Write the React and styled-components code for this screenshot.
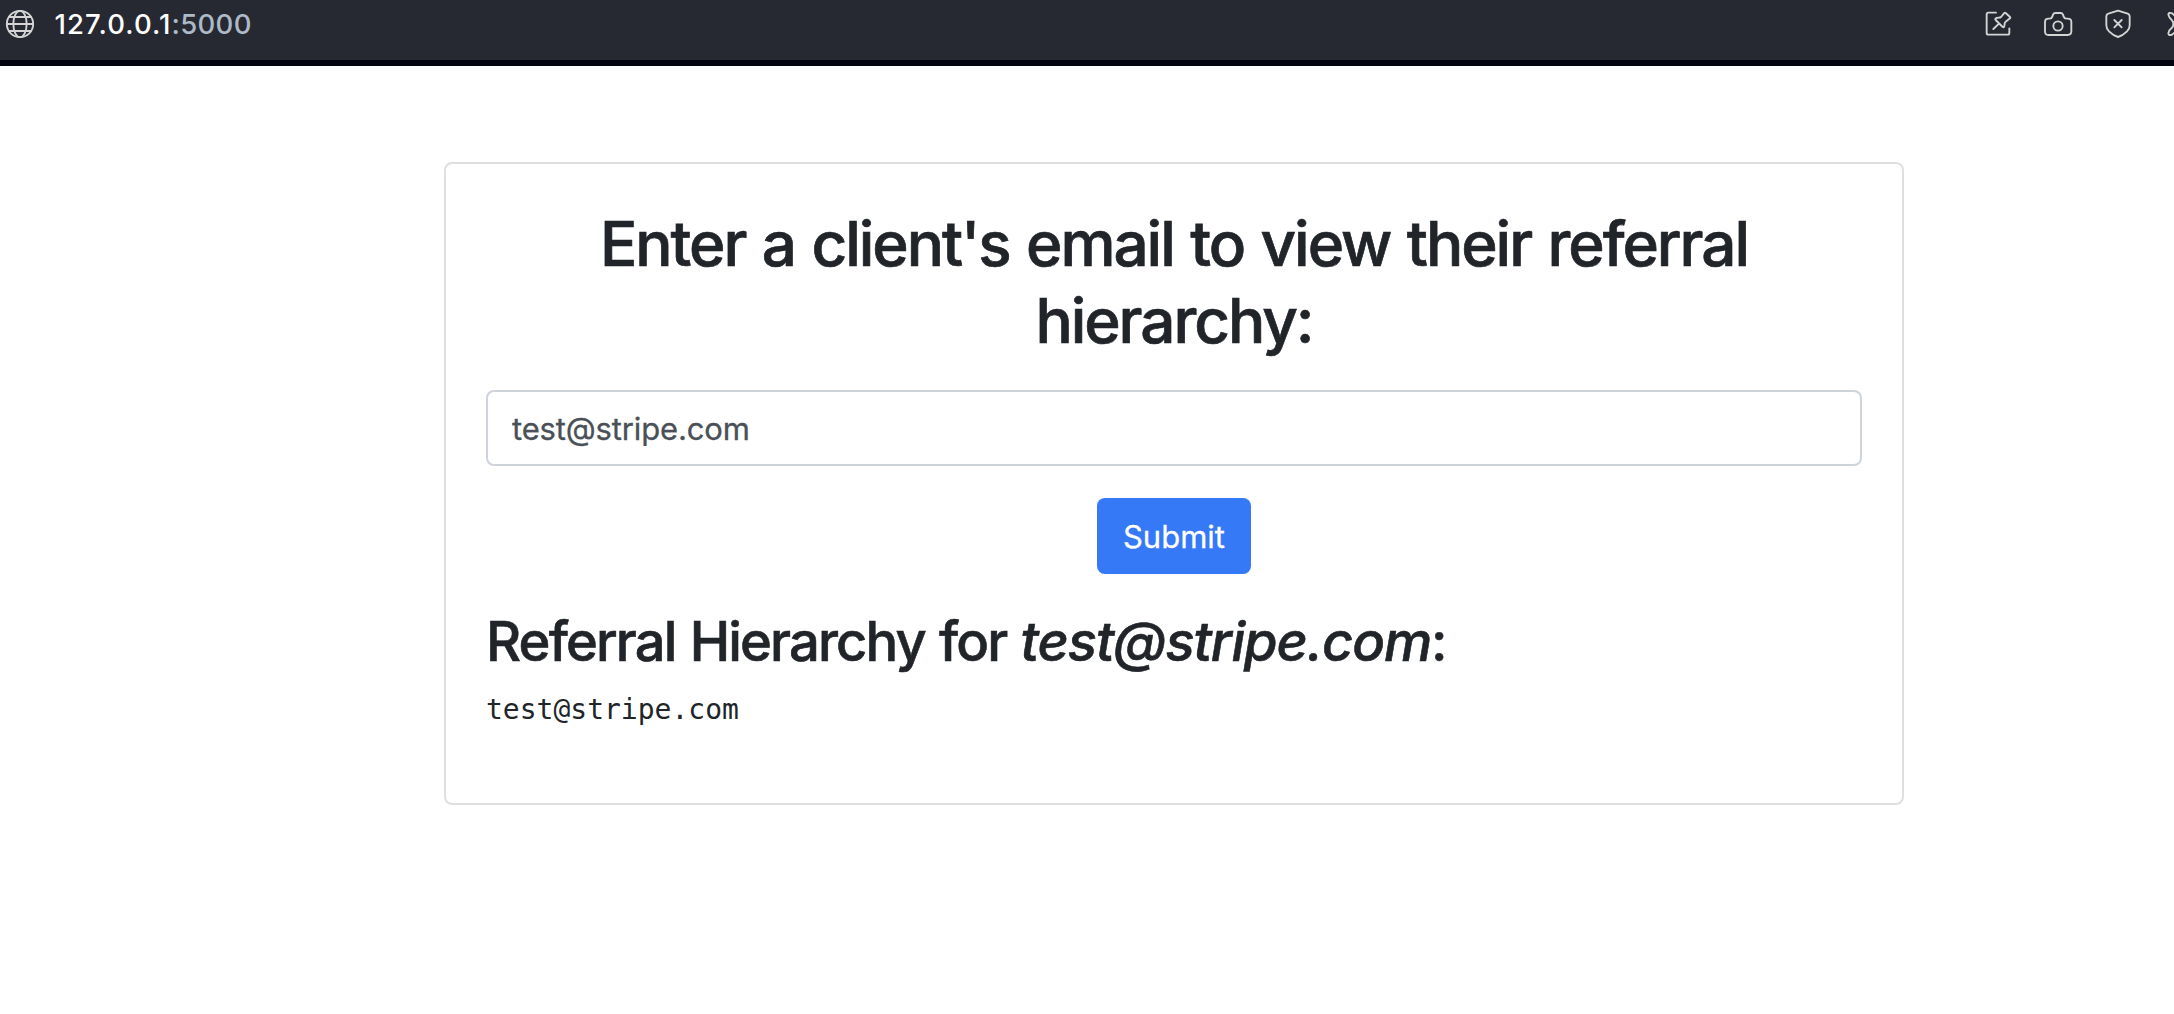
import React from "react";
import styled, { createGlobalStyle } from "styled-components";

const GlobalStyle = createGlobalStyle`
  *, *::before, *::after { box-sizing: border-box; }
  body {
    margin: 0;
    background: #fff;
    color: #212529;
    font-family: Inter, "Liberation Sans", sans-serif;
    font-size: 31px;
    line-height: 48px;
    overflow: hidden;
  }
`;

const AddressBar = styled.header`
  display: flex;
  align-items: flex-start;
  justify-content: space-between;
  height: 66px;
  padding: 8px 0 0 4px;
  overflow: hidden;
  background: #272932;
  border-bottom: 6px solid #02040f;
`;

const Location = styled.div`
  display: flex;
  align-items: center;
  gap: 18.5px;
  height: 32px;
`;

const Url = styled.span`
  font-size: 27.5px;
  font-weight: 500;
  line-height: 32px;
  letter-spacing: 1.1px;
  color: #fff;
`;

const Port = styled.span`
  letter-spacing: 0.3px;
  color: #adbac7;
`;

const Actions = styled.div`
  display: flex;
  gap: 28px;
  width: 192px;
`;

const Glyph = styled.svg`
  flex: none;
  width: 32px;
  height: 32px;
  fill: none;
  stroke: #d4d4d5;
  stroke-width: 5.6;
  stroke-linecap: round;
  stroke-linejoin: round;
`;

const Container = styled.main`
  width: 1460px;
  margin: 96px 0 0 444px;
`;

const Card = styled.section`
  height: 643px;
  padding: 42px 40px 38px;
  border: 2px solid #dfdfdf;
  border-radius: 8px;
`;

const Title = styled.h2`
  margin: 0 0 30px;
  font-size: 62px;
  font-weight: 500;
  line-height: 76.8px;
  letter-spacing: -2.05px;
  word-spacing: 2px;
  -webkit-text-stroke: 0.7px currentColor;
  text-align: center;
`;

const Form = styled.form`
  display: flex;
  flex-direction: column;
  align-items: center;
  gap: 32px;
`;

const EmailInput = styled.input`
  width: 100%;
  height: 76px;
  padding: 14px 24px 12px;
  border: 2px solid #ced4da;
  border-radius: 8px;
  background: #fff;
  color: #495057;
  font: inherit;
  letter-spacing: -0.15px;
  -webkit-text-stroke: 0.3px currentColor;
  outline: 0;
`;

const SubmitButton = styled.button`
  width: 154px;
  height: 76px;
  padding: 2px 0 0;
  border: 0;
  border-radius: 8px;
  background: #3579f6;
  color: #fff;
  font: inherit;
  letter-spacing: 0;
  -webkit-text-stroke: 0.3px currentColor;
`;

const ResultTitle = styled.h3`
  margin: 34px 0 14px;
  font-size: 54.3px;
  font-weight: 500;
  line-height: 67.2px;
  letter-spacing: -1.85px;
  word-spacing: 1.5px;
  -webkit-text-stroke: 0.6px currentColor;
  white-space: nowrap;

  em { letter-spacing: -1.15px; }
`;

const Hierarchy = styled.pre`
  margin: 0;
  font-family: "DejaVu Sans Mono", monospace;
  font-size: 28px;
  line-height: 42px;
`;

const Globe = () => (
  <Glyph viewBox="0 0 96 96">
    <circle cx="48" cy="48" r="39.5" />
    <ellipse cx="48" cy="48" rx="20" ry="39.5" />
    <path d="M9 48H87M15 27H81M15 69H81" />
  </Glyph>
);

const PinPage = () => (
  <Glyph viewBox="0 0 96 96">
    <path d="M42 14H19Q14 14 14 19V75Q14 80 19 80H77Q82 80 82 75V61" />
    <path d="M66 16L57 27Q55 29 50 29L43 30Q38 32 41 36L62 57Q66 59 67 54L68 47Q68 43 71 41L84 31Q86 29 84 27L71 15Q68 13 66 16ZM51 47L34 63" />
  </Glyph>
);

const Camera = () => (
  <Glyph viewBox="0 0 96 96">
    <path d="M9 42Q9 32 19 32H23Q29 32 31 26L33 20Q35 15 40 15H56Q61 15 63 20L65 26Q67 32 73 32H77Q88 32 88 42V70Q88 81 77 81H19Q9 81 9 70Z" />
    <circle cx="48" cy="54" r="14" />
  </Glyph>
);

const Shield = () => (
  <Glyph viewBox="0 0 96 96">
    <path d="M48 8L19 17Q13 19 13 25V52Q13 63 21 70Q33 82 48 87Q63 82 75 70Q83 63 83 52V25Q83 19 77 17ZM37 36L59 58M59 36L37 58" />
  </Glyph>
);

const Overflow = () => (
  <Glyph viewBox="0 0 96 96">
    <path d="M48 33Q39 23 30 16Q20 12 19 20Q21 30 31 38Q37 48 31 58Q21 66 19 76Q20 84 30 80Q39 73 48 63" />
  </Glyph>
);

export default function App() {
  return (
    <>
      <GlobalStyle />
      <AddressBar>
        <Location>
          <Globe />
          <Url>127.0.0.1<Port>:5000</Port></Url>
        </Location>
        <Actions>
          <PinPage />
          <Camera />
          <Shield />
          <Overflow />
        </Actions>
      </AddressBar>
      <Container>
        <Card>
          <Title>Enter a client's email to view their referral hierarchy:</Title>
          <Form onSubmit={(e) => e.preventDefault()}>
            <EmailInput type="text" defaultValue="test@stripe.com" />
            <SubmitButton type="submit">Submit</SubmitButton>
          </Form>
          <ResultTitle>Referral Hierarchy for <em>test@stripe.com</em>:</ResultTitle>
          <Hierarchy>test@stripe.com</Hierarchy>
        </Card>
      </Container>
    </>
  );
}
